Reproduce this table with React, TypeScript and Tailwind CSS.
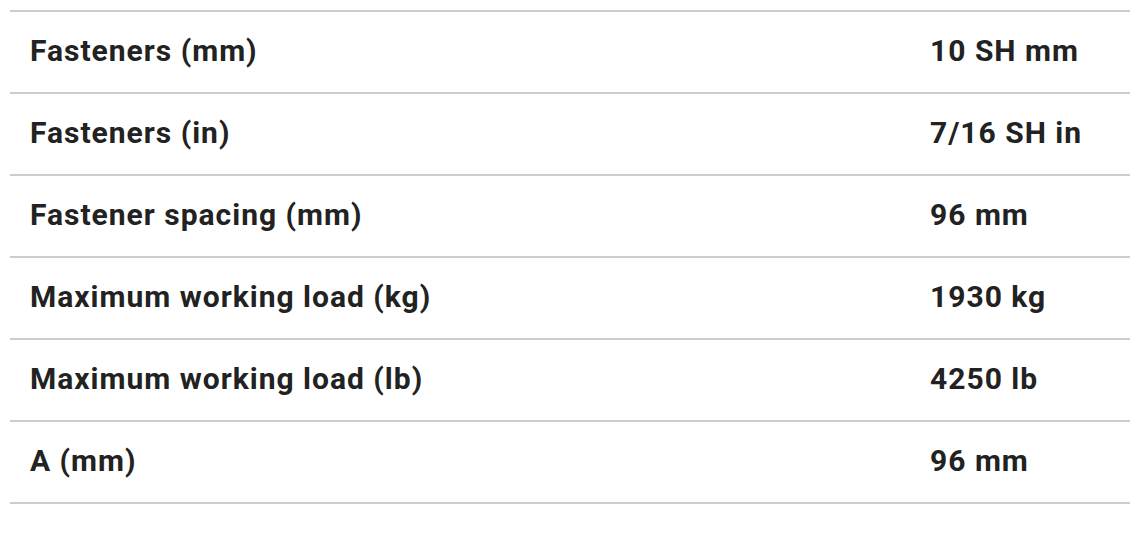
const ROWS: [string, string][] = [
  ['Fasteners (mm)', '10 SH mm'],
  ['Fasteners (in)', '7/16 SH in'],
  ['Fastener spacing (mm)', '96 mm'],
  ['Maximum working load (kg)', '1930 kg'],
  ['Maximum working load (lb)', '4250 lb'],
  ['A (mm)', '96 mm'],
];

export default function App() {
  return (
    <div className="min-h-screen bg-white pl-[10px] pt-[10px] font-['Roboto',sans-serif] text-[#222]">
      <table className="w-full border-collapse border-t-2 border-[#cccccc]">
        <tbody>
          {ROWS.map(([label, value]) => (
            <tr key={label} className="h-[82px] border-b-2 border-[#cccccc]">
              <td className="w-[900px] pl-[20px] pb-[3px] text-[30px] font-bold tracking-[1px]">{label}</td>
              <td className="pl-[20px] pb-[3px] text-[30px] font-bold tracking-[1px]">{value}</td>
            </tr>
          ))}
        </tbody>
      </table>
    </div>
  );
}
